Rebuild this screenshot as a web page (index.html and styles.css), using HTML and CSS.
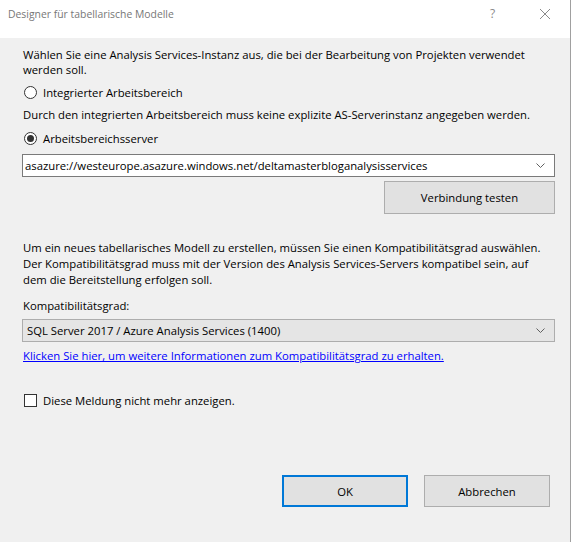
FILE: index.html
```
<!DOCTYPE html>
<html lang="de">
<head>
<meta charset="utf-8">
<title>Designer für tabellarische Modelle</title>
<link rel="stylesheet" href="styles.css">
</head>
<body>
<div class="window">
  <div class="titlebar">
    <span class="title">Designer für tabellarische Modelle</span>
    <span class="tb-help">?</span>
    <span class="tb-close">
      <svg width="12" height="12" viewBox="0 0 12 12"><path d="M1 1L11 11M11 1L1 11" stroke="#8a8a8a" stroke-width="1" fill="none"/></svg>
    </span>
  </div>
  <div class="content">
    <p class="intro">Wählen Sie eine Analysis Services-Instanz aus, die bei der Bearbeitung von Projekten verwendet werden soll.</p>
    <div class="option"><span class="radio"></span><span>Integrierter Arbeitsbereich</span></div>
    <p class="line">Durch den integrierten Arbeitsbereich muss keine explizite AS-Serverinstanz angegeben werden.</p>
    <div class="option option-server"><span class="radio checked"></span><span>Arbeitsbereichsserver</span></div>
    <div class="combo combo-edit">
      <span class="combo-text">asazure://westeurope.asazure.windows.net/deltamasterbloganalysisservices</span>
      <svg class="chev" width="9" height="5" viewBox="0 0 9 5"><path d="M0.5 0.5L4.5 4.5L8.5 0.5" stroke="#606060" fill="none"/></svg>
    </div>
    <div class="test-row"><button class="btn btn-test">Verbindung testen</button></div>
    <p class="para">Um ein neues tabellarisches Modell zu erstellen, müssen Sie einen Kompatibilitätsgrad auswählen. Der Kompatibilitätsgrad muss mit der Version des Analysis Services-Servers kompatibel sein, auf dem die Bereitstellung erfolgen soll.</p>
    <p class="label">Kompatibilitätsgrad:</p>
    <div class="combo combo-list">
      <span class="combo-text">SQL Server 2017 / Azure Analysis Services (1400)</span>
      <svg class="chev" width="9" height="5" viewBox="0 0 9 5"><path d="M0.5 0.5L4.5 4.5L8.5 0.5" stroke="#606060" fill="none"/></svg>
    </div>
    <a class="link" href="#">Klicken Sie hier, um weitere Informationen zum Kompatibilitätsgrad zu erhalten.</a>
    <div class="option check-row"><span class="checkbox"></span><span>Diese Meldung nicht mehr anzeigen.</span></div>
    <div class="buttons">
      <button class="btn btn-ok">OK</button>
      <button class="btn btn-cancel">Abbrechen</button>
    </div>
  </div>
</div>
</body>
</html>
```
FILE: styles.css
```
* { box-sizing: border-box; }
html, body { margin: 0; padding: 0; }
body {
  width: 571px;
  height: 542px;
  overflow: hidden;
  background: #f0f0f0;
  font-family: "Open Sans", "Noto Sans", sans-serif;
  font-size: 11.3px;
  color: #000;
}
.window {
  width: 571px;
  height: 542px;
  border-right: 1px solid #a0a0a0;
  background: #f0f0f0;
}
.titlebar {
  height: 38px;
  background: #fff;
  display: flex;
  align-items: flex-start;
  padding: 6px 0 0 8px;
  color: #777;
  font-size: 10.4px;
  line-height: 16px;
}
.title { flex: 1; }
.tb-help { width: 10px; margin-right: 39px; color: #8a8a8a; font-size: 12px; }
.tb-close { width: 12px; margin-right: 19px; display: flex; padding-top: 2px; }
.content {
  padding: 9px 0 0 23px;
  width: 555px;
}
p { margin: 0; }
.intro { line-height: 15px; padding-right: 20px; }
.option {
  display: flex;
  align-items: center;
  height: 15px;
  margin-top: 8px;
  gap: 6px;
  margin-left: 1px;
}
.option-server { margin-top: 9px; }
.line { margin-top: 7px; line-height: 15px; white-space: nowrap; }
.radio {
  width: 13px; height: 13px;
  border: 1px solid #333;
  border-radius: 50%;
  background: #fff;
  display: flex; align-items: center; justify-content: center;
}
.radio.checked::after {
  content: "";
  width: 7px; height: 7px;
  border-radius: 50%;
  background: #333;
}
.checkbox {
  width: 13px; height: 13px;
  border: 1px solid #333;
  background: #fff;
}
.combo {
  height: 23px;
  margin-top: 8px;
  margin-left: -1px;
  width: 533px;
  display: flex;
  align-items: center;
  padding: 0 9px 0 2px;
}
.combo-text { flex: 1; }
.combo-edit { background: #fff; border: 1px solid #7a7a7a; }
.combo-list { background: #e5e5e5; border: 1px solid #adadad; padding-left: 4px; margin-top: 5px; }
.test-row { display: flex; justify-content: flex-end; margin-top: 4px; }
.btn {
  font-family: inherit;
  font-size: 11.3px;
  color: #000;
  background: #e1e1e1;
  border: 1px solid #adadad;
  padding: 0;
  margin: 0;
}
.btn-test { width: 171px; height: 33px; }
.para { margin-top: 26px; line-height: 16px; width: 530px; }
.label { margin-top: 10px; line-height: 16px; }
.link {
  display: block;
  margin-top: 6px;
  line-height: 15px;
  color: #0000ff;
  text-decoration: underline;
}
.check-row { margin-top: 30px; }
.buttons {
  display: flex;
  justify-content: flex-end;
  gap: 16px;
  margin-top: 67px;
  padding-right: 5px;
}
.btn-ok { width: 126px; height: 32px; border: 2px solid #0078d7; }
.btn-cancel { width: 126px; height: 32px; }
```
